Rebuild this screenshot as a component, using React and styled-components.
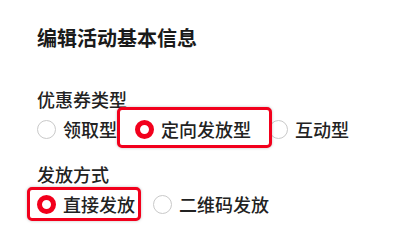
import React from "react";
import styled, { createGlobalStyle, css } from "styled-components";

const Global = createGlobalStyle`
  html, body { margin: 0; padding: 0; background: #fff; }
  body { font-family: "Noto Sans CJK SC", "Noto Sans", sans-serif; color: #222; }
`;

const Page = styled.div`
  padding: 26px 0 0 37px;
  width: 418px;
  height: 241px;
  box-sizing: border-box;
  overflow: hidden;
`;

const Title = styled.h2`
  margin: 0 0 37px;
  font-size: 20px;
  line-height: 24px;
  font-weight: 700;
  color: #1a1a1a;
`;

const Section = styled.div`
  margin-bottom: 21px;
`;

const Label = styled.div`
  font-size: 18px;
  line-height: 24px;
  font-weight: 500;
  color: #222;
`;

const Row = styled.div`
  display: flex;
  align-items: center;
  gap: 18px;
  margin-top: 6px;
  height: 24px;
`;

const Option = styled.div`
  position: relative;
  display: flex;
  align-items: center;
  gap: 7px;
  font-size: 18px;
  line-height: 24px;
  font-weight: 500;
  color: #222;
  ${(p) =>
    p.$mark &&
    css`
      z-index: 1;
      &::before {
        content: "";
        position: absolute;
        z-index: -1;
        top: ${p.$mark[0]}px;
        right: ${p.$mark[1]}px;
        bottom: ${p.$mark[2]}px;
        left: ${p.$mark[3]}px;
        background: #fff;
        border: 3px solid #f2001c;
        border-radius: 5px;
        box-shadow: 0 0 3px rgba(0, 0, 0, 0.25);
      }
    `}
`;

const Radio = styled.span`
  width: 19px;
  height: 19px;
  box-sizing: border-box;
  border-radius: 50%;
  flex: none;
  background: #fff;
  border: ${(p) => (p.$checked ? "5px solid #f2001c" : "1px solid #c9c9c9")};
`;

const groups = [
  {
    label: "优惠券类型",
    options: [
      { text: "领取型" },
      { text: "定向发放型", checked: true, mark: [-10, -21, -7, -18] },
      { text: "互动型" },
    ],
  },
  {
    label: "发放方式",
    options: [
      { text: "直接发放", checked: true, mark: [-5, -6, -5, -10] },
      { text: "二维码发放" },
    ],
  },
];

export default function App() {
  return (
    <>
      <Global />
      <Page>
        <Title>编辑活动基本信息</Title>
        {groups.map((g) => (
          <Section key={g.label}>
            <Label>{g.label}</Label>
            <Row>
              {g.options.map((o) => (
                <Option key={o.text} $mark={o.mark}>
                  <Radio $checked={o.checked} />
                  <span>{o.text}</span>
                </Option>
              ))}
            </Row>
          </Section>
        ))}
      </Page>
    </>
  );
}
